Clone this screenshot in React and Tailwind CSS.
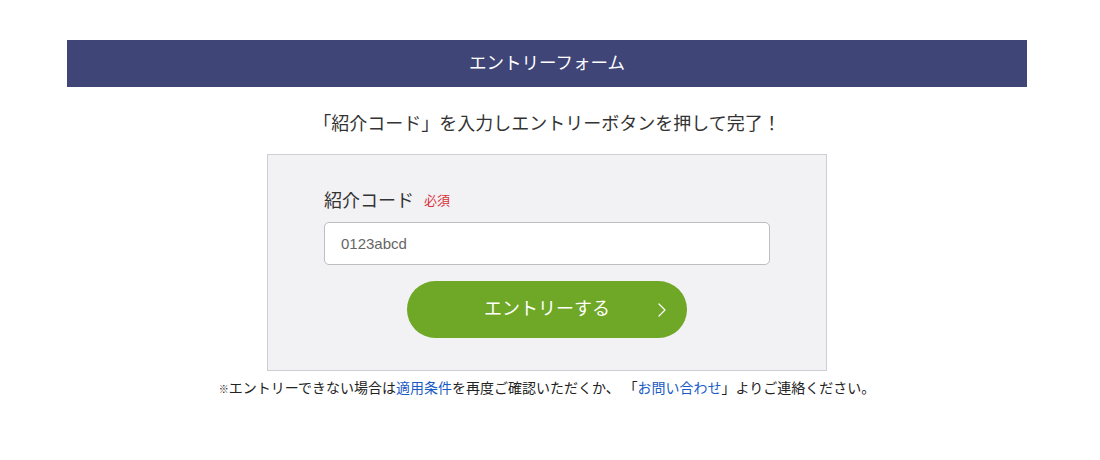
import React, { useState } from 'react';

const font = { fontFamily: '"Liberation Sans", "Noto Sans CJK JP", sans-serif' };

function Chevron() {
  return (
    <svg width="8" height="14" viewBox="0 0 8 14" fill="none">
      <polyline points="1,1 7,7 1,13" stroke="#ffffff" strokeWidth="1.2" strokeLinecap="round" strokeLinejoin="round" />
    </svg>
  );
}

export default function App() {
  const [code, setCode] = useState('');

  return (
    <div className="min-h-[460px] bg-white pt-[40px]" style={font}>
      <div className="ml-[67px] w-[960px]">
        <div className="h-[47px] bg-[#404577] flex items-center justify-center">
          <h1 className="text-white text-[17.5px] leading-none">エントリーフォーム</h1>
        </div>

        <p className="mt-[24px] mb-[16px] text-center text-[18px] leading-[27px] text-[#333]">
          「紹介コード」を入力しエントリーボタンを押して完了！
        </p>

        <div className="mx-auto w-[560px] border border-[#cfcfd3] bg-[#f2f2f4] px-[56px] pt-[33px] pb-[32px]">
          <div className="flex items-center gap-[10px] mb-[8px] leading-[26px]">
            <span className="text-[18px] text-[#333]">紹介コード</span>
            <span className="text-[13px] text-[#d9303a]">必須</span>
          </div>
          <input
            type="text"
            value={code}
            onChange={(e) => setCode(e.target.value)}
            placeholder="0123abcd"
            className="block w-full h-[43px] rounded-[5px] border border-[#bdbdc2] bg-white px-[16px] text-[15px] text-[#333] placeholder:text-[#666] focus:outline-none"
            style={font}
          />
          <button
            className="relative mx-auto mt-[16px] flex h-[57px] w-[280px] items-center justify-center rounded-full bg-[#6fa726] text-white text-[18px]"
            style={font}
          >
            エントリーする
            <span className="absolute right-[21px] top-1/2 -translate-y-1/2 flex">
              <Chevron />
            </span>
          </button>
        </div>

        <p className="mt-[7px] text-center text-[14px] leading-[21px] text-[#222]">
          <span className="text-[10px]">※</span>エントリーできない場合は
          <a href="#" className="text-[#1a5cc4]">適用条件</a>
          を再度ご確認いただくか、&nbsp;「<a href="#" className="text-[#1a5cc4]">お問い合わせ</a>」よりご連絡ください。
        </p>
      </div>
    </div>
  );
}
